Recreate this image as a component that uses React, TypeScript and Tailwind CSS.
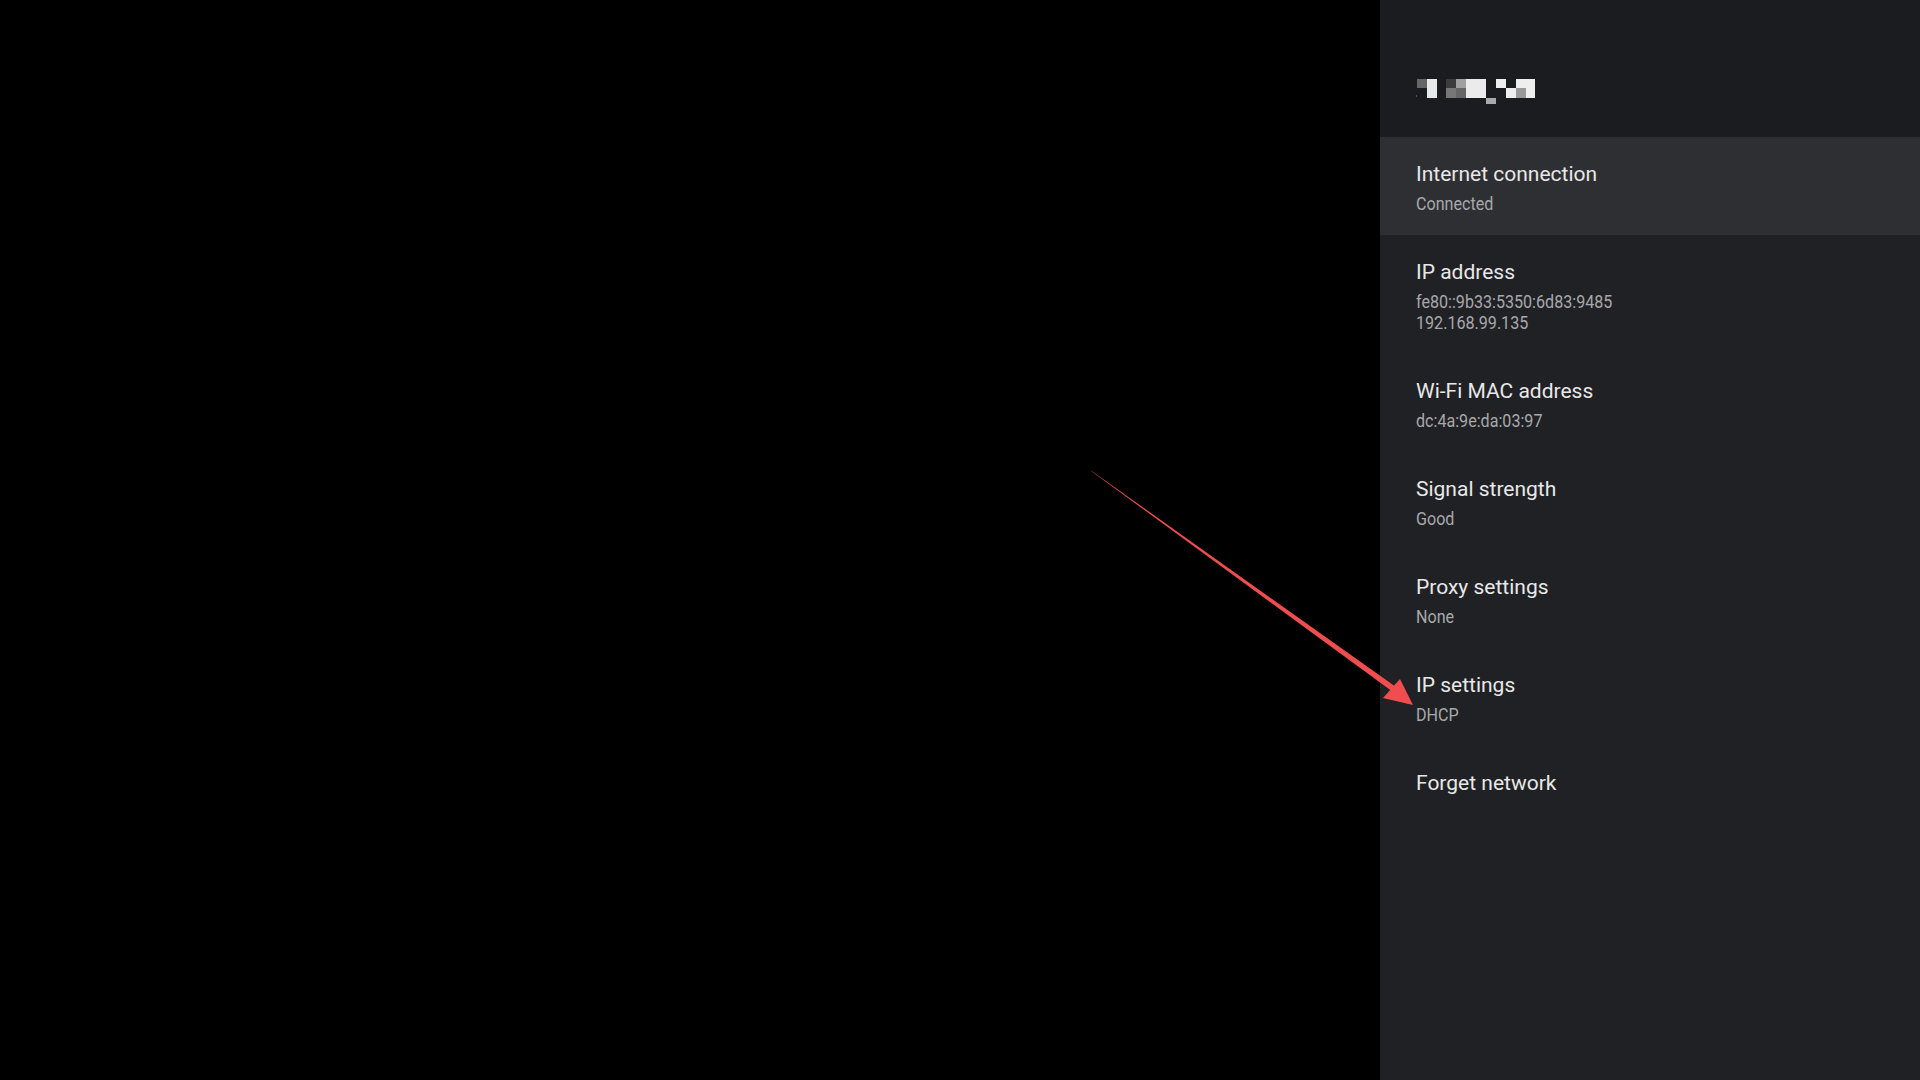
import React from "react";

type Item = { title: string; lines?: string[]; focused?: boolean };

const items: Item[] = [
  { title: "Internet connection", lines: ["Connected"], focused: true },
  { title: "IP address", lines: ["fe80::9b33:5350:6d83:9485", "192.168.99.135"] },
  { title: "Wi-Fi MAC address", lines: ["dc:4a:9e:da:03:97"] },
  { title: "Signal strength", lines: ["Good"] },
  { title: "Proxy settings", lines: ["None"] },
  { title: "IP settings", lines: ["DHCP"] },
  { title: "Forget network" },
];

// Obscured network name, drawn as a mosaic of grey cells
function MosaicName() {
  const cells: [number, number, number, number, string][] = [
    [1, 0, 10, 9, "#666666"],
    [11, 0, 10, 19, "#e8e8e8"],
    [30, 0, 10, 9, "#3c3c3c"],
    [40, 0, 10, 9, "#a0a0a0"],
    [50, 0, 20, 19, "#ebebeb"],
    [30, 9, 10, 10, "#777777"],
    [40, 9, 10, 10, "#666666"],
    [80, 0, 10, 9, "#eeeeee"],
    [90, 9, 10, 10, "#eeeeee"],
    [100, 0, 10, 9, "#eeeeee"],
    [100, 9, 10, 10, "#999999"],
    [110, 0, 9, 19, "#eeeeee"],
    [70, 19, 10, 6, "#aaaaaa"],
    [0, 16, 1, 2, "#555555"],
  ];
  return (
    <svg width="120" height="26" viewBox="0 0 120 26">
      {cells.map(([x, y, w, h, c], i) => (
        <rect key={i} x={x} y={y} width={w} height={h} fill={c} />
      ))}
    </svg>
  );
}

function Row({ item }: { item: Item }) {
  return (
    <div
      className={`pl-[36px] pr-6 pt-[23px] pb-[20px] ${
        item.focused ? "bg-[#2e2f33]" : ""
      }`}
    >
      <div className="text-[21px] leading-[28px] text-[#e8e8e8] font-['Roboto',sans-serif]">
        {item.title}
      </div>
      {item.lines && (
        <div className="mt-[6px]">
          {item.lines.map((l) => (
            <div
              key={l}
              className="text-[17.5px] leading-[21px] text-[#a8a8aa] font-['Roboto',sans-serif] origin-left scale-x-[0.92] whitespace-nowrap"
            >
              {l}
            </div>
          ))}
        </div>
      )}
    </div>
  );
}

export default function App() {
  return (
    <div className="relative flex h-[1080px] w-[1920px] overflow-hidden bg-black">
      <div className="flex-1 bg-black" />
      <div className="flex w-[540px] flex-col bg-[#202125]">
        <div className="flex h-[137px] items-start bg-[#1b1c1f] pl-[36px] pt-[79px]">
          <MosaicName />
        </div>
        {items.map((it) => (
          <Row key={it.title} item={it} />
        ))}
      </div>

      {/* annotation arrow pointing at the IP settings entry */}
      <svg
        className="pointer-events-none absolute left-0 top-0"
        width="1920"
        height="1080"
        viewBox="0 0 1920 1080"
      >
        <polygon points="1091,470.5 1091.8,471.5 1393,692 1396,687" fill="#f04e4e" />
        <polygon points="1413,705 1383,698 1400,679" fill="#f04e4e" />
      </svg>
    </div>
  );
}
